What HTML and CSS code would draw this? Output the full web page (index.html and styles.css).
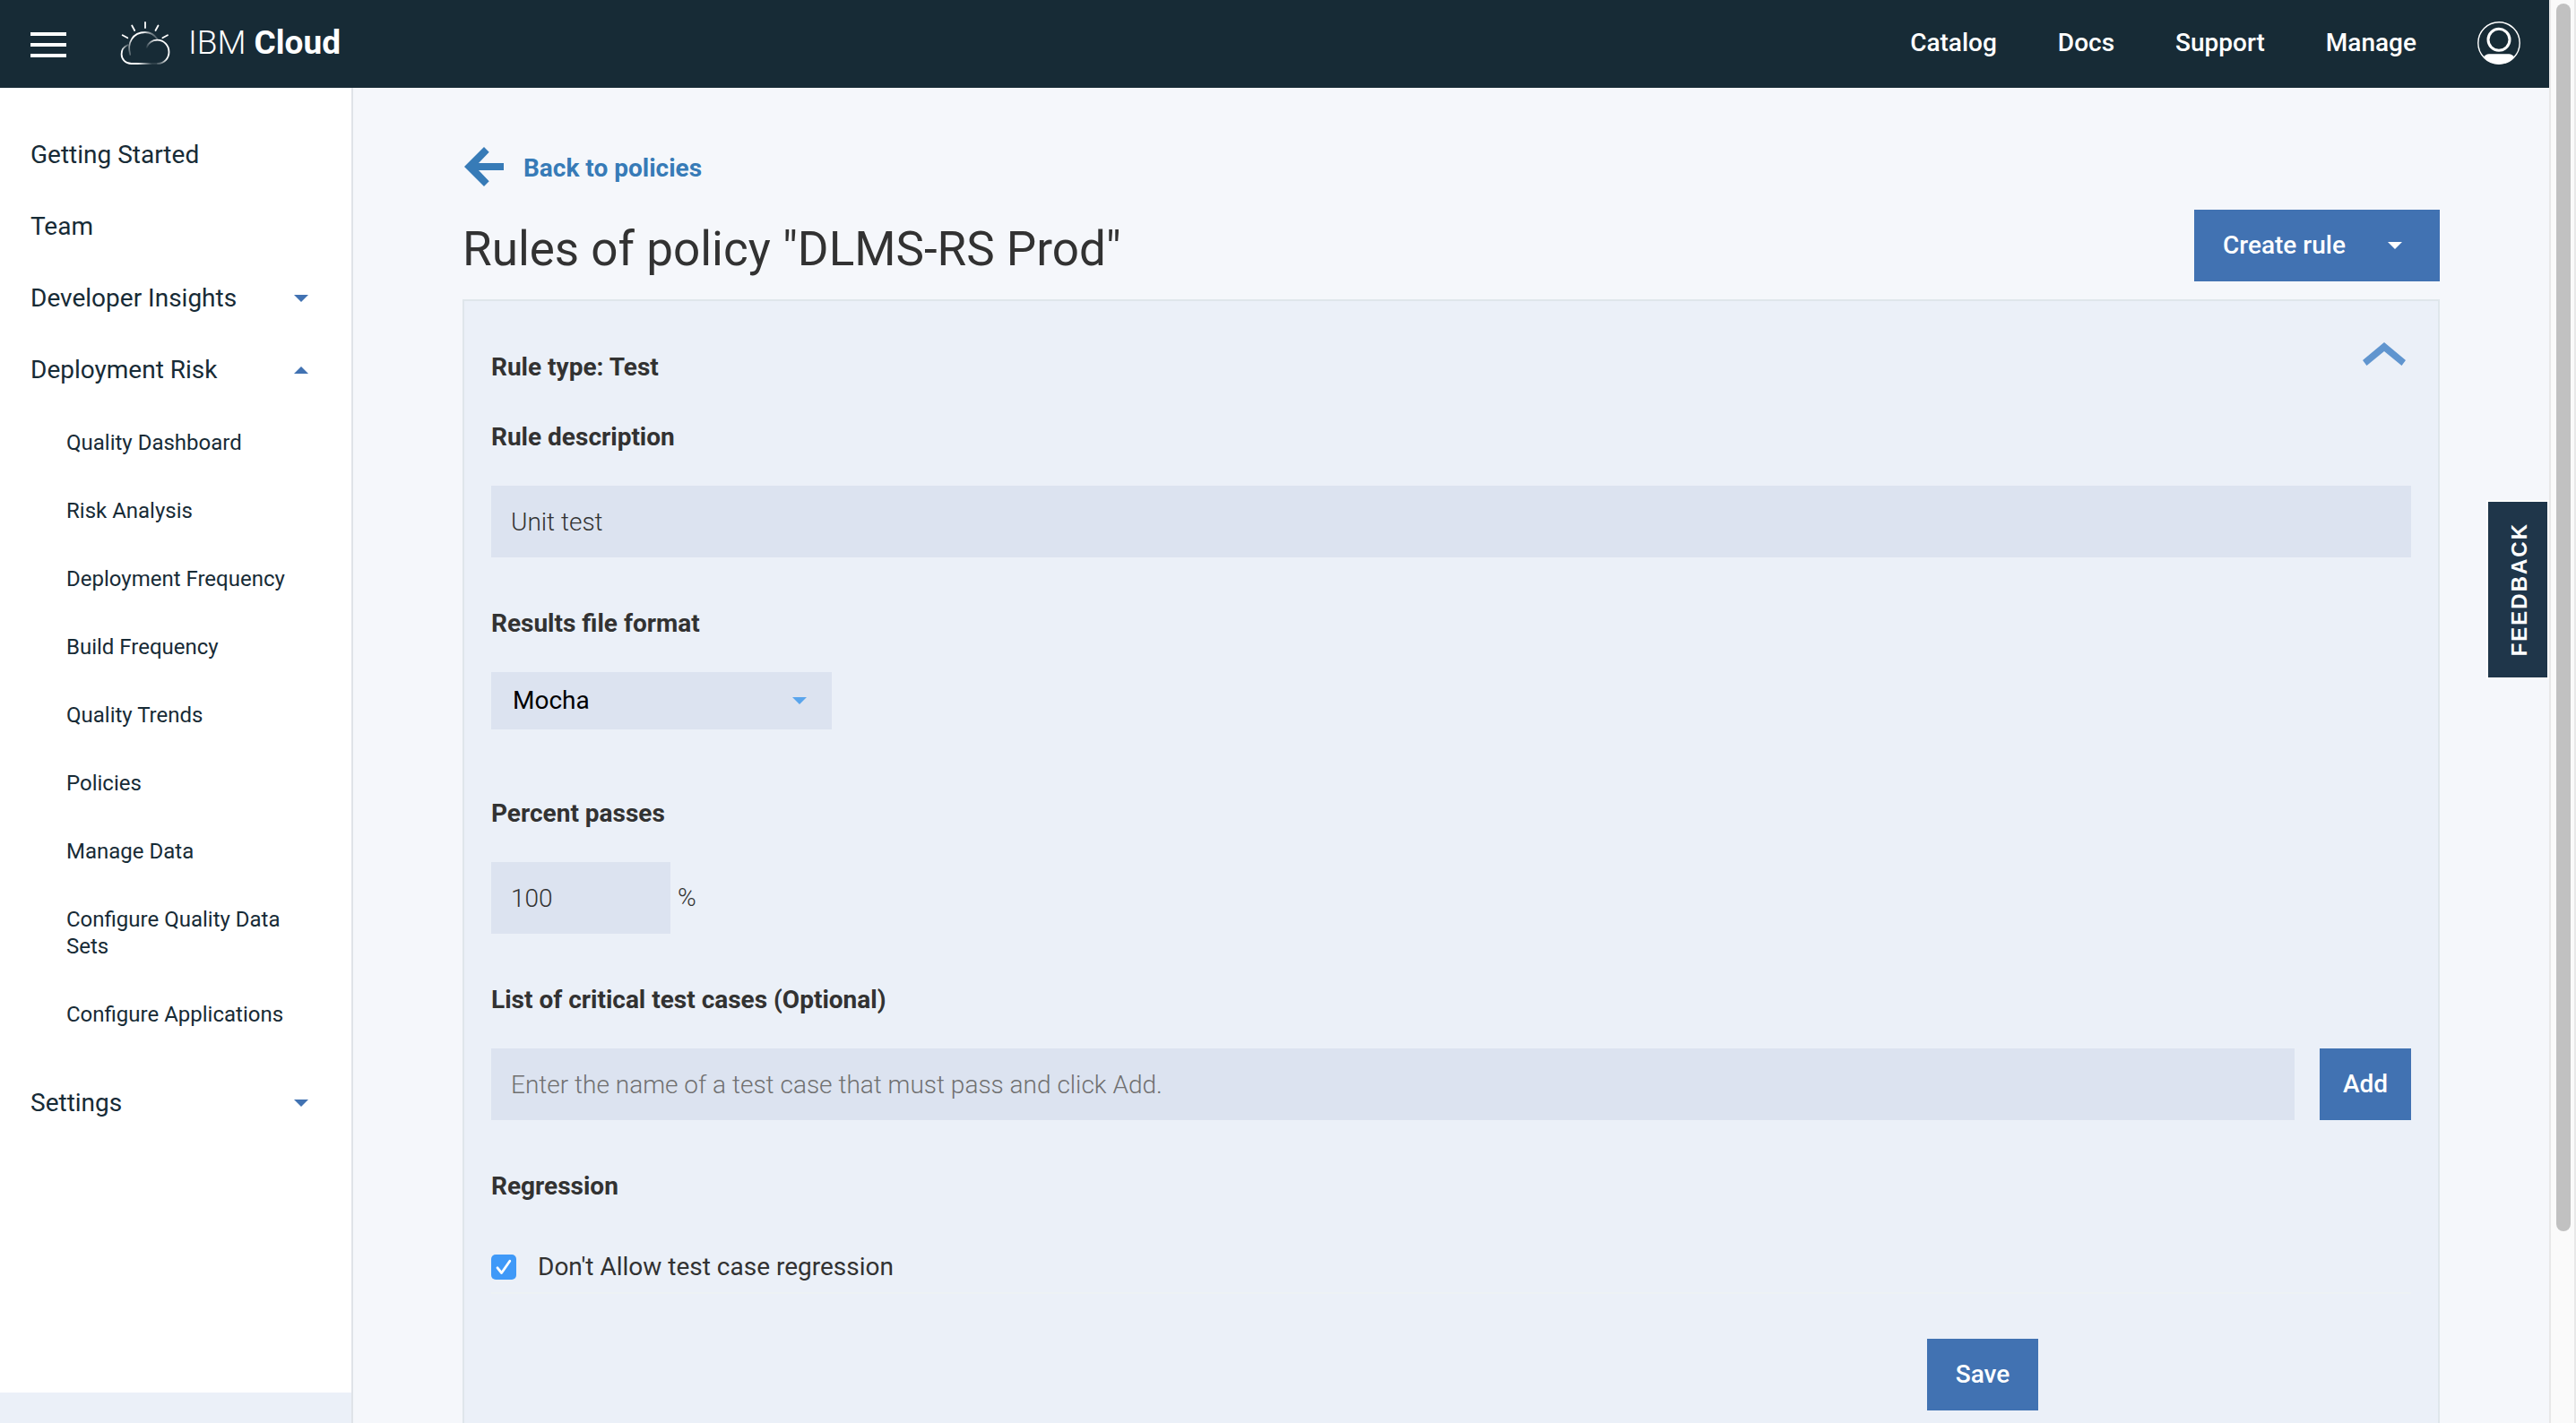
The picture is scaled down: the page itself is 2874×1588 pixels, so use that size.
FILE: index.html
```html
<!DOCTYPE html>
<html lang="en">
<head>
<meta charset="utf-8">
<title>IBM Cloud - Rules of policy</title>
<link rel="stylesheet" href="styles.css">
</head>
<body>
<div class="app">
  <header class="topbar">
    <button class="menu-button" type="button" aria-label="Menu">
      <span class="menu-bar"></span><span class="menu-bar"></span><span class="menu-bar"></span>
    </button>
    <a class="brand" href="#">
      <svg class="brand-logo" width="56" height="48" viewBox="0 0 56 48" fill="none" stroke-width="1.8" stroke-linecap="round" aria-hidden="true">
        <defs>
          <linearGradient id="fade-left" gradientUnits="userSpaceOnUse" x1="3" y1="33" x2="10" y2="25">
            <stop offset="0" stop-color="#fff"/><stop offset="1" stop-color="#fff" stop-opacity="0.1"/>
          </linearGradient>
          <linearGradient id="fade-right" gradientUnits="userSpaceOnUse" x1="41" y1="22" x2="29" y2="29">
            <stop offset="0" stop-color="#fff"/><stop offset="1" stop-color="#fff" stop-opacity="0.05"/>
          </linearGradient>
          <linearGradient id="fade-sun" gradientUnits="userSpaceOnUse" x1="9" y1="38" x2="42" y2="19">
            <stop offset="0" stop-color="#fff" stop-opacity="0.1"/><stop offset="0.35" stop-color="#fff"/>
            <stop offset="0.7" stop-color="#fff"/><stop offset="1" stop-color="#fff" stop-opacity="0.2"/>
          </linearGradient>
        </defs>
        <path stroke="#fff" d="M28 1v6M13.200 4.500l3 5.500M42.500 4.500l-3 5.500M2.700 15.300l5.600 3M53 15.300l-5.600 3"/>
        <path stroke="url(#fade-sun)" d="M11.200 37C7.500 24 14 12 28 12c6 0 10.500 3 13.500 7.500"/>
        <path stroke="url(#fade-right)" d="M29.500 29C31 24 36 20.700 41.500 20.700C49 20.700 54.500 27 54.500 34C54.500 41 49 47 42 47"/>
        <path stroke="url(#fade-left)" d="M42 47H12.500C6 47 1.600 42 1.600 36.500C1.600 32 4 28 8.800 26"/>
      </svg>
      <span class="brand-name">IBM <strong>Cloud</strong></span>
    </a>
    <nav class="topnav" aria-label="Main">
      <a href="#">Catalog</a>
      <a href="#">Docs</a>
      <a href="#">Support</a>
      <a href="#">Manage</a>
      <button class="avatar" type="button" aria-label="Account">
        <svg width="48" height="48" viewBox="0 0 48 48" fill="none" stroke="#fff" aria-hidden="true">
          <clipPath id="avatar-clip"><circle cx="24" cy="24" r="23.500"/></clipPath>
          <path clip-path="url(#avatar-clip)" fill="#fff" stroke="none" d="M7 40Q9 36.300 13 36.300H35Q39 36.300 41 40V48H7Z"/>
          <circle cx="24" cy="24" r="23.200" stroke-width="1.400"/>
          <circle cx="24" cy="20.300" r="12" stroke-width="3" fill="#172b36"/>
        </svg>
      </button>
    </nav>
  </header>

  <div class="body">
    <aside class="sidebar">
      <nav class="sidenav" aria-label="Toolchain">
        <a class="side-item" href="#">Getting Started</a>
        <a class="side-item" href="#">Team</a>
        <a class="side-item" href="#">Developer Insights<span class="caret"></span></a>
        <a class="side-item" href="#">Deployment Risk<span class="caret caret-up"></span></a>
        <div class="side-group">
          <a class="side-subitem" href="#">Quality Dashboard</a>
          <a class="side-subitem" href="#">Risk Analysis</a>
          <a class="side-subitem" href="#">Deployment Frequency</a>
          <a class="side-subitem" href="#">Build Frequency</a>
          <a class="side-subitem" href="#">Quality Trends</a>
          <a class="side-subitem" href="#">Policies</a>
          <a class="side-subitem" href="#">Manage Data</a>
          <a class="side-subitem" href="#">Configure Quality Data Sets</a>
          <a class="side-subitem" href="#">Configure Applications</a>
        </div>
        <a class="side-item" href="#">Settings<span class="caret"></span></a>
      </nav>
      <div class="side-foot"></div>
    </aside>

    <main class="main">
      <a class="back-link" href="#">
        <svg width="44" height="44" viewBox="0 0 44 44" fill="currentColor" aria-hidden="true">
          <path d="M0 22L22 0L27.700 5.700L16 18H44V26H16L27.700 38.300L22 44Z"/>
        </svg>
        <span>Back to policies</span>
      </a>
      <div class="title-row">
        <h1 class="title">Rules of policy "DLMS-RS Prod"</h1>
        <button class="button button-create" type="button">Create rule<span class="caret caret-white"></span></button>
      </div>

      <form class="panel">
        <div class="panel-head">
          <h2 class="panel-title">Rule type: Test</h2>
          <button class="collapse" type="button" aria-label="Collapse">
            <svg width="48" height="26" viewBox="0 0 48 26" fill="#6095cf" aria-hidden="true">
              <path d="M24 0L48 20L43.500 26L24 10L4.500 26L0 20Z"/>
            </svg>
          </button>
        </div>

        <div class="field">
          <label class="label" for="description">Rule description</label>
          <input class="input" id="description" type="text" value="Unit test">
        </div>

        <div class="field field-format">
          <label class="label" for="format">Results file format</label>
          <div class="select-wrap">
            <select class="select" id="format"><option>Mocha</option></select>
            <span class="caret caret-light"></span>
          </div>
        </div>

        <div class="field">
          <label class="label" for="percent">Percent passes</label>
          <div class="percent-row">
            <input class="input input-percent" id="percent" type="text" value="100">
            <span class="unit">%</span>
          </div>
        </div>

        <div class="field">
          <label class="label" for="critical">List of critical test cases (Optional)</label>
          <div class="add-row">
            <input class="input" id="critical" type="text" placeholder="Enter the name of a test case that must pass and click Add.">
            <button class="button button-add" type="button">Add</button>
          </div>
        </div>

        <h3 class="label regression-title">Regression</h3>
        <label class="check-row">
          <span class="check">
            <input class="check-input" type="checkbox" checked>
            <svg class="check-mark" width="28" height="28" viewBox="0 0 28 28" fill="none" stroke="#fff" stroke-width="2.800" stroke-linecap="round" stroke-linejoin="round" aria-hidden="true">
              <path d="M7 14.800L11.600 20.500L20.800 7.200"/>
            </svg>
          </span>
          Don't Allow test case regression
        </label>
        <div class="actions">
          <button class="button button-save" type="submit">Save</button>
        </div>
      </form>
    </main>
  </div>
  <button class="feedback" type="button">FEEDBACK</button>
</div>
<div class="scrollbar" aria-hidden="true"><div class="scroll-thumb"></div></div>
</body>
</html>
```
FILE: styles.css
```css
* {
  box-sizing: border-box;
}

body {
  margin: 0;
  height: 100vh;
  display: flex;
  overflow: hidden;
  background: #f5f7fb;
  color: #323232;
  font-family: Roboto, "Noto Sans", sans-serif;
  font-size: 28px;
  line-height: 40px;
}

a {
  color: inherit;
  text-decoration: none;
}

button,
input,
select {
  font: inherit;
  color: inherit;
  border: 0;
  border-radius: 0;
  margin: 0;
  padding: 0;
  background: none;
}

.app {
  position: relative;
  flex: 1;
  min-width: 0;
  display: flex;
  flex-direction: column;
}

/* Top bar */

.topbar {
  flex: none;
  height: 98px;
  display: flex;
  align-items: center;
  padding: 0 32px 2px 34px;
  background: #172b36;
  color: #fff;
}

.menu-button {
  display: flex;
  flex-direction: column;
  gap: 8px;
  width: 40px;
  padding-top: 4px;
}

.menu-bar {
  height: 4px;
  background: #fff;
}

.brand {
  display: flex;
  align-items: center;
  gap: 20px;
  margin-left: 60px;
}

.brand-logo {
  display: block;
}

.brand-name {
  font-size: 37px;
  font-weight: 300;
}

.brand-name strong {
  font-weight: 700;
}

.topnav {
  display: flex;
  align-items: center;
  gap: 68px;
  margin-left: auto;
  font-weight: 500;
}

.avatar svg,
.collapse svg {
  display: block;
}

/* Side navigation */

.body {
  flex: 1;
  min-height: 0;
  display: flex;
}

.sidebar {
  flex: none;
  width: 394px;
  display: flex;
  flex-direction: column;
  border-right: 2px solid #dfe3e8;
  background: #fff;
  color: #172b36;
}

.sidenav {
  flex: 1;
  padding-top: 35px;
}

.side-item {
  display: flex;
  align-items: center;
  justify-content: space-between;
  height: 80px;
  padding: 0 48px 0 34px;
}

.side-group {
  padding: 3px 0 21px;
}

.side-subitem {
  display: block;
  padding: 23px 48px 23px 74px;
  font-size: 24px;
  line-height: 30px;
}

.side-foot {
  height: 34px;
  background: #ebf0f8;
}

.caret {
  border: 8px solid transparent;
  border-top-color: #4172b2;
  border-bottom-width: 0;
}

.caret-up {
  border-top-width: 0;
  border-bottom: 8px solid #4172b2;
}

.caret-white {
  border-top-color: #fff;
}

.caret-light {
  border-top-color: #5aa5ec;
}

/* Page content */

.main {
  flex: 1;
  min-width: 0;
  display: flex;
  flex-direction: column;
  padding: 66px 122px 0;
}

.back-link {
  display: flex;
  align-items: flex-end;
  align-self: flex-start;
  gap: 22px;
  padding-left: 2px;
  color: #377bb7;
  font-weight: 700;
}

.title-row {
  display: flex;
  align-items: flex-end;
  justify-content: space-between;
  margin: 26px 0 20px;
}

.title {
  margin: 0;
  font-size: 53px;
  font-weight: 400;
  line-height: 72px;
}

.button {
  height: 80px;
  background: #4172b2;
  color: #fff;
  font-weight: 500;
}

.button-create {
  display: flex;
  align-items: center;
  justify-content: space-between;
  width: 274px;
  padding: 0 42px 0 32px;
}

.panel {
  flex: 1;
  padding: 46px 30px 0;
  border: 2px solid #dfe6eb;
  border-bottom: 0;
  background: #ebf0f8;
}

.panel-head {
  display: flex;
  align-items: flex-start;
  justify-content: space-between;
  padding-right: 6px;
  margin-bottom: 38px;
}

.panel-title {
  margin: 8px 0 0;
  font-size: 28px;
  font-weight: 700;
}

.field {
  display: flex;
  flex-direction: column;
  gap: 34px;
  margin-bottom: 54px;
}

.field-format {
  margin-bottom: 74px;
}

.label {
  font-size: 28px;
  font-weight: 700;
}

.input {
  width: 100%;
  height: 80px;
  padding: 0 22px;
  background: #dce3f0;
  font-weight: 300;
}

.input::placeholder {
  color: #707070;
  opacity: 1;
}

.select-wrap {
  display: grid;
  align-items: center;
  width: 380px;
  background: #dce3f0;
}

.select {
  grid-area: 1 / 1;
  appearance: none;
  height: 64px;
  padding: 0 24px;
  color: #000;
}

.select-wrap .caret {
  grid-area: 1 / 1;
  justify-self: end;
  margin-right: 28px;
  pointer-events: none;
}

.percent-row {
  display: flex;
  align-items: center;
  gap: 8px;
}

.input-percent {
  width: 200px;
}

.unit {
  font-weight: 300;
}

.add-row {
  display: flex;
  gap: 28px;
}

.button-add {
  flex: none;
  width: 102px;
}

.regression-title {
  margin: 0 0 50px;
}

.check-row {
  display: flex;
  align-items: center;
  gap: 24px;
}

.check {
  display: grid;
}

.check-input {
  grid-area: 1 / 1;
  appearance: none;
  width: 28px;
  height: 28px;
  border-radius: 5px;
  background: #3f99f8;
}

.check-mark {
  grid-area: 1 / 1;
  pointer-events: none;
}

.actions {
  display: flex;
  justify-content: flex-end;
  margin-top: 8px;
  padding: 50px 416px 0 0;
  border-top: 2px solid #edf2f5;
}

.button-save {
  width: 124px;
}

/* Feedback tab pinned to the right edge */

.feedback {
  position: absolute;
  top: 558px;
  right: 0;
  width: 70px;
  height: 200px;
  padding-left: 4px;
  border: 2px solid #fff;
  background: #1f364a;
  color: #fff;
  font: bold 24px/28px "Liberation Sans", Arial, sans-serif;
  letter-spacing: 2px;
  writing-mode: sideways-lr;
}

/* Scroll track */

.scrollbar {
  flex: none;
  width: 30px;
  padding: 4px 4px 0 6px;
  border: solid #e8e8e8;
  border-width: 0 2px;
  background: #fafafa;
}

.scroll-thumb {
  width: 16px;
  height: 86.5%;
  border-radius: 8px;
  background: #c1c1c1;
}
```
